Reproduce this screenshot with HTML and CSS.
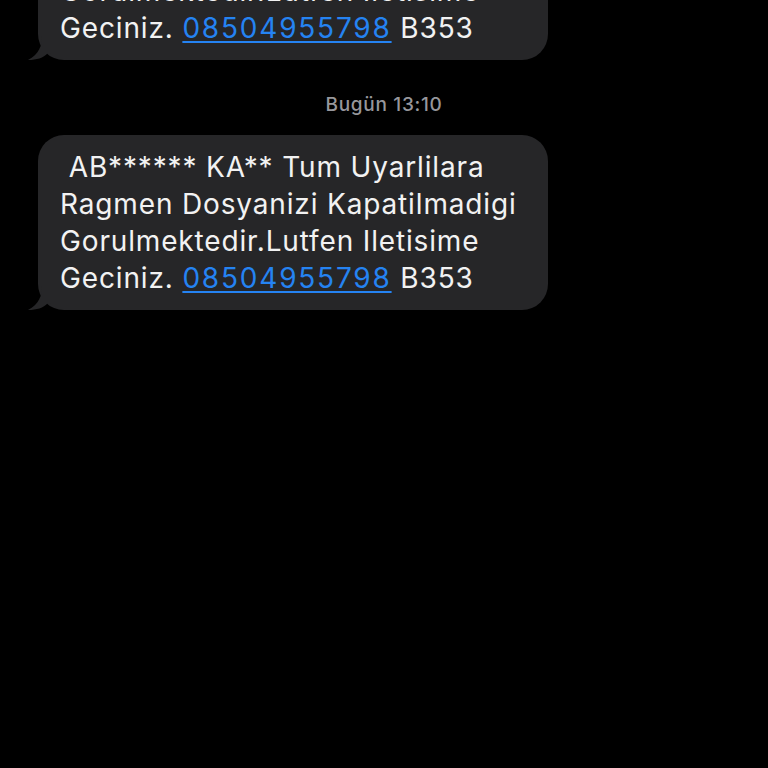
FILE: index.html
```html
<!DOCTYPE html>
<html lang="tr">
<head>
<meta charset="utf-8">
<link rel="stylesheet" href="styles.css">
</head>
<body>
<div class="thread">
  <div class="bubble first">
    <p class="text">&nbsp;AB****** KA** Tum Uyarlilara<br>Ragmen Dosyanizi Kapatilmadigi<br>Gorulmektedir.Lutfen Iletisime<br>Geciniz. <a class="link">08504955798</a> B353</p>
    <svg class="tail" width="24" height="24" viewBox="0 0 24 24"><path d="M14 0 C14 10 11 18 0 24 C9 24 15 22 20 17 C22 18 24 18 24 18 L24 0 Z" fill="#262628"/></svg>
  </div>
  <div class="stamp">Bugün 13:10</div>
  <div class="bubble">
    <p class="text">&nbsp;AB****** KA** Tum Uyarlilara<br>Ragmen Dosyanizi Kapatilmadigi<br>Gorulmektedir.Lutfen Iletisime<br>Geciniz. <a class="link">08504955798</a> B353</p>
    <svg class="tail" width="24" height="24" viewBox="0 0 24 24"><path d="M14 0 C14 10 11 18 0 24 C9 24 15 22 20 17 C22 18 24 18 24 18 L24 0 Z" fill="#262628"/></svg>
  </div>
</div>
</body>
</html>
```
FILE: styles.css
```css
html, body {
  margin: 0;
  padding: 0;
  background: #000;
  width: 768px;
  height: 768px;
  overflow: hidden;
}
.thread {
  display: flex;
  flex-direction: column;
  align-items: flex-start;
  padding-left: 38px;
}
.bubble {
  position: relative;
  width: 510px;
  box-sizing: border-box;
  background: #262628;
  border-radius: 26px;
  padding: 14px 6px 13px 22px;
}
.bubble.first {
  margin-top: -115px;
}
.text {
  margin: 0;
  font-family: Inter, "Liberation Sans", Arial, sans-serif;
  font-size: 28px;
  line-height: 37px;
  letter-spacing: 0.85px;
  color: #f2f2f2;
}
.link {
  color: #2583f2;
  letter-spacing: 1.8px;
  text-decoration: underline;
  text-decoration-thickness: 2px;
  text-underline-offset: 3px;
}
.tail {
  position: absolute;
  left: -10px;
  bottom: 0;
}
.stamp {
  align-self: stretch;
  margin-left: -38px;
  text-align: center;
  font-family: Inter, "Liberation Sans", Arial, sans-serif;
  font-size: 19px;
  font-weight: 500;
  letter-spacing: 0.7px;
  color: #97979c;
  padding: 32px 0 18px;
  line-height: 25px;
}
```
